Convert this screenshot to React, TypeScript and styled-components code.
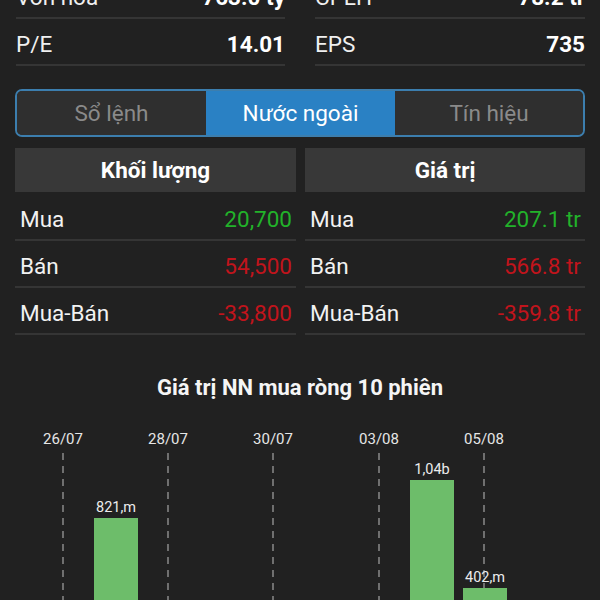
import React from "react";
import styled, { createGlobalStyle } from "styled-components";

const GlobalStyle = createGlobalStyle`
  html, body {
    margin: 0;
    padding: 0;
    background: #212121;
    overflow: hidden;
  }
  body {
    font-family: Roboto, "Noto Sans", "Liberation Sans", sans-serif;
    color: #f2f2f2;
  }
  * { box-sizing: border-box; }
`;

const Page = styled.div`
  width: 600px;
  height: 628px;
  margin-top: -28px;
  padding: 0 15px;
  display: flex;
  flex-direction: column;
`;

const StatsGrid = styled.div`
  display: grid;
  grid-template-columns: 269px 270px;
  column-gap: 30px;
  padding-left: 1px;
`;

const StatRow = styled.div`
  height: 47px;
  padding-top: 5px;
  display: flex;
  align-items: center;
  justify-content: space-between;
  border-bottom: 2px solid #353535;
  font-size: 22.5px;
`;

const StatLabel = styled.span`
  color: #f0f0f0;
`;

const StatValue = styled.span`
  font-weight: 700;
  color: #ffffff;
`;

const Tabs = styled.div`
  margin-top: 23px;
  height: 48px;
  flex-shrink: 0;
  display: grid;
  grid-template-columns: 189px 189px 1fr;
  border: 2px solid #3c7eae;
  border-radius: 7px;
  overflow: hidden;
  background: #2f2f2f;
`;

const Tab = styled.div<{ $active?: boolean }>`
  display: flex;
  align-items: center;
  justify-content: center;
  font-size: 22.5px;
  color: ${({ $active }) => ($active ? "#ffffff" : "#8a8a8a")};
  background: ${({ $active }) => ($active ? "#2a81c4" : "#2f2f2f")};
`;

const Tables = styled.div`
  margin-top: 11px;
  display: grid;
  grid-template-columns: 281px 280px;
  column-gap: 9px;
  flex-shrink: 0;
`;

const Table = styled.div`
  display: flex;
  flex-direction: column;
`;

const TableHead = styled.div`
  height: 44px;
  margin-bottom: 2px;
  background: #383838;
  display: flex;
  align-items: center;
  justify-content: center;
  font-size: 22.5px;
  font-weight: 700;
  color: #ffffff;
`;

const TableRow = styled.div`
  height: 47px;
  padding: 5px 4px 0 5px;
  display: flex;
  align-items: center;
  justify-content: space-between;
  border-bottom: 2px solid #353535;
  font-size: 22.5px;
`;

const RowLabel = styled.span`
  color: #f2f2f2;
`;

const RowValue = styled.span<{ $tone: "up" | "down" }>`
  color: ${({ $tone }) => ($tone === "up" ? "#22b22a" : "#c1141c")};
`;

const ChartTitle = styled.div`
  margin-top: 41px;
  line-height: 24px;
  text-align: center;
  font-size: 22px;
  font-weight: 700;
  color: #f5f5f5;
  flex-shrink: 0;
`;

const ChartWrap = styled.div`
  margin: 20px -15px 0;
  height: 184px;
  flex-shrink: 0;
`;

const stats = [
  [
    { label: "Vốn hoá", value: "763.0 tỷ" },
    { label: "P/E", value: "14.01" },
  ],
  [
    { label: "CPLH", value: "78.2 tr" },
    { label: "EPS", value: "735" },
  ],
];

const tables = [
  {
    title: "Khối lượng",
    rows: [
      { label: "Mua", value: "20,700", tone: "up" as const },
      { label: "Bán", value: "54,500", tone: "down" as const },
      { label: "Mua-Bán", value: "-33,800", tone: "down" as const },
    ],
  },
  {
    title: "Giá trị",
    rows: [
      { label: "Mua", value: "207.1 tr", tone: "up" as const },
      { label: "Bán", value: "566.8 tr", tone: "down" as const },
      { label: "Mua-Bán", value: "-359.8 tr", tone: "down" as const },
    ],
  },
];

// chart coords: x in page px, y relative to chart top (page y 420)
const dates = [
  { x: 63, label: "26/07" },
  { x: 168, label: "28/07" },
  { x: 273, label: "30/07" },
  { x: 379, label: "03/08" },
  { x: 484, label: "05/08" },
];

const bars = [
  { cx: 116, top: 98, label: "821,m" },
  { cx: 432, top: 60, label: "1,04b" },
  { cx: 485, top: 168, label: "402,m" },
];

const NetChart = () => (
  <svg width={600} height={184} viewBox="0 0 600 184">
    {dates.map((d) => (
      <g key={d.label}>
        <text
          x={d.x}
          y={24}
          textAnchor="middle"
          fontFamily="Roboto, sans-serif"
          fontSize={15}
          fill="#e6e6e6"
        >
          {d.label}
        </text>
        <line
          x1={d.x}
          y1={33}
          x2={d.x}
          y2={184}
          stroke="#9a9a9a"
          strokeWidth={1.3}
          strokeDasharray="7 6"
        />
      </g>
    ))}
    {bars.map((b) => (
      <g key={b.label}>
        <rect x={b.cx - 22} y={b.top} width={44} height={184 - b.top} fill="#6dbd6a" />
        <text
          x={b.cx}
          y={b.top - 6}
          textAnchor="middle"
          fontFamily="Roboto, sans-serif"
          fontSize={14.5}
          fill="#ececec"
        >
          {b.label}
        </text>
      </g>
    ))}
  </svg>
);

export default function App() {
  return (
    <>
      <GlobalStyle />
      <Page>
        <StatsGrid>
          {stats.map((col, i) => (
            <div key={i}>
              {col.map((s) => (
                <StatRow key={s.label}>
                  <StatLabel>{s.label}</StatLabel>
                  <StatValue>{s.value}</StatValue>
                </StatRow>
              ))}
            </div>
          ))}
        </StatsGrid>

        <Tabs>
          <Tab>Sổ lệnh</Tab>
          <Tab $active>Nước ngoài</Tab>
          <Tab>Tín hiệu</Tab>
        </Tabs>

        <Tables>
          {tables.map((t) => (
            <Table key={t.title}>
              <TableHead>{t.title}</TableHead>
              {t.rows.map((r) => (
                <TableRow key={r.label}>
                  <RowLabel>{r.label}</RowLabel>
                  <RowValue $tone={r.tone}>{r.value}</RowValue>
                </TableRow>
              ))}
            </Table>
          ))}
        </Tables>

        <ChartTitle>Giá trị NN mua ròng 10 phiên</ChartTitle>
        <ChartWrap>
          <NetChart />
        </ChartWrap>
      </Page>
    </>
  );
}
